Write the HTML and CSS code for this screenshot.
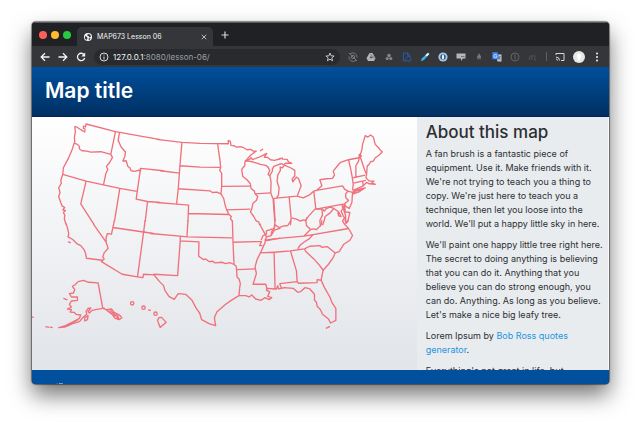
FILE: index.html
```html
<!DOCTYPE html>
<html lang="en">
<head>
<meta charset="utf-8">
<title>MAP673 Lesson 06</title>
<link rel="stylesheet" href="styles.css">
</head>
<body>
<div class="window">
  <div class="tabs">
    <div class="lights"><i class="red"></i><i class="yellow"></i><i class="green"></i></div>
    <div class="tab">
      <svg class="globe" viewBox="0 0 16 16"><circle cx="8" cy="8" r="8" fill="#f1f3f4"/><path d="M2 6l4 2 1 3-2 3-3-3zM8 2l4 1 2 4-3 2-2-3-3-1zM10 10l3 1-2 3-2-1z" fill="#35363a"/></svg>
      <span class="tab-title">MAP673 Lesson 06</span>
      <button class="plain" aria-label="Close tab"><svg class="close" viewBox="0 0 8 8"><path d="M1 1l6 6M7 1L1 7" fill="none" stroke="#c4c7ca" stroke-width="1.2"/></svg></button>
    </div>
    <button class="plain add" aria-label="New tab"><svg class="plus" viewBox="0 0 8 8"><path d="M4 .5v7M.5 4h7" stroke="#d5d7da" stroke-width="1.2"/></svg></button>
  </div>
  <div class="toolbar">
    <button class="plain" aria-label="Back"><svg class="nav" viewBox="0 0 10 10"><path d="M9.500 5H1.500M5 1.200L1.200 5 5 8.800" class="line"/></svg></button>
    <button class="plain" aria-label="Forward"><svg class="nav" viewBox="0 0 10 10"><path d="M.5 5h8M5 1.200L8.800 5 5 8.800" class="line"/></svg></button>
    <button class="plain" aria-label="Reload"><svg class="nav" viewBox="0 0 10 10"><path d="M8.300 3A3.700 3.700 0 1 0 8.700 6" class="line"/><path d="M9.200 .6v3.900H5.300z" fill="#f1f3f4"/></svg></button>
    <div class="address">
      <svg class="info" viewBox="0 0 10 10"><circle cx="5" cy="5" r="4" fill="none" stroke="#d5d7da"/><path d="M5 4.500v3M5 2.500v1" stroke="#d5d7da"/></svg>
      <span class="url"><b>127.0.0.1</b>:8080/lesson-06/</span>
      <svg class="star" viewBox="0 0 10 10"><path d="M5 1l1.100 2.800 3 .2-2.300 1.900.8 2.900L5 7.200 2.400 8.800l.8-2.900L.9 4l3-.2z" fill="none" stroke="#d5d7da" stroke-width=".9"/></svg>
    </div>
    <div class="extensions">
      <svg viewBox="0 0 10 10"><path d="M2 2a4.200 4.200 0 0 1 7 3.500M8 8.300A4.200 4.200 0 0 1 1 4.500M1 1l8 8" fill="none" stroke="#77797c"/><circle cx="5" cy="5" r="1.700" fill="none" stroke="#77797c"/></svg>
      <svg viewBox="0 0 10 10"><path d="M3.500 1h3l3 5.300L8 9H2L.5 6.300z" fill="#b5b5b5"/><path d="M5 3.500L3.500 6.300h3z" fill="#55575a"/><path d="M3.500 1l3 5.300h3" fill="#858585"/></svg>
      <svg viewBox="0 0 10 10"><circle cx="5" cy="3.500" r="1.800" fill="#858585"/><circle cx="3.200" cy="6.500" r="1.600" fill="#858585"/><circle cx="6.800" cy="6.500" r="1.600" fill="#858585"/></svg>
      <svg viewBox="0 0 10 10"><path d="M1.500 1h4l2 2v2M4 9H1.500V1M5.500 1v2h2M4 8a1.500 1.500 0 0 1 1-2.500 1.800 1.800 0 0 1 3.500 1A1.300 1.300 0 0 1 8 9H5z" fill="none" stroke="#245da5"/></svg>
      <svg viewBox="0 0 10 10"><path d="M8 .7L9.300 2 4 8 .8 9.300 2 6.300z" fill="#36b9e8"/><path d="M8 .7L9.300 2 7 4.500 5.300 3.300z" fill="#e5f7ff"/></svg>
      <svg viewBox="0 0 10 10"><circle cx="5" cy="5" r="4.600" fill="#a8c6e6"/><circle cx="5" cy="5" r="2.700" fill="#34577d"/><ellipse cx="5" cy="5" rx="1.100" ry="2.500" fill="#eef5ff"/></svg>
      <svg viewBox="0 0 10 10"><path d="M.5 1.500h9v5H7L5 9V6.500H.5z" fill="#b5b6b8"/><path d="M5 4.500h3.500" stroke="#717376"/></svg>
      <svg viewBox="0 0 10 10"><path d="M5 1c.5 2 2.300 2.500 2 4.500L6 8 5 5.500 4 8 3 5.500C3 4 4.500 3 5 1z" fill="#77797c"/></svg>
      <svg viewBox="0 0 10 10"><path d="M4 2.500h5.500v7H5.500z" fill="#c5c8cc"/><path d="M.3.300h5.200l2 7H.3z" fill="#4285f4"/><path d="M5 3.300a1.700 1.700 0 1 0-.3 2V4.200H3.500" fill="none" stroke="#e2ecff" stroke-width=".8"/><path d="M6.700 5h2.200M8 4v1L7 7.500M7 6l1.700 2" stroke="#58708f" stroke-width=".6"/></svg>
      <svg viewBox="0 0 10 10"><circle cx="5" cy="5" r="4" fill="none" stroke="#626468"/><path d="M5 2.500v5" stroke="#626468"/></svg>
      <svg viewBox="0 0 10 10"><path d="M1 8l1.500-4.500M2 5c1-2 3-2 2 0L3.500 8M4.500 5c1-2 3-2 2.500 0L6.500 8H8" fill="none" stroke="#505256"/></svg>
    </div>
    <span class="divider"></span>
    <svg class="nav" viewBox="0 0 10 10"><path d="M1 3V1.500h8v7H6M1 5a3.500 3.500 0 0 1 3.500 3.500M1 7a1.500 1.500 0 0 1 1.500 1.500" fill="none" stroke="#d5d7da"/></svg>
    <svg class="avatar" viewBox="0 0 12 12"><circle cx="6" cy="6" r="6" fill="#e7e7e7"/><path d="M4 3h4v3.500L7 8v1.500H5V8L4 6.500z" fill="#fff"/></svg>
    <svg class="menu" viewBox="0 0 4 10"><circle cx="2" cy="1.500" r="1" /><circle cx="2" cy="5" r="1"/><circle cx="2" cy="8.500" r="1"/></svg>
  </div>
  <header class="header"><h1>Map title</h1></header>
  <main class="main">
    <div class="map">
      <svg viewBox="6 6 1152 759" preserveAspectRatio="xMinYMin meet" role="img" aria-label="Map of the United States">
        <g class="states">
          <g>
            <path d="M134 34L140 36 152 44 164 51 165 42 160 40 160 33 166 36 168 27 256 50 390 74"/>
            <path d="M134 34L136 50 133 66 134 80 131 88 126 104 115 130 100 158 98 178 92 196 94 204 86 218 90 232 86 244 92 262 96 272 104 277 98 284 106 286 100 292 104 300 103 312 108 328"/>
            <path d="M132 84L142 88 148 94 148 102 156 107 170 108 182 111 212 110 242 118"/>
            <path d="M256 50L242 118 247 127 238 143 229 154 233 163 227 176 220 209"/>
            <path d="M98 178L168 198 220 209 269 220 320 229"/>
            <path d="M268 53L264 76 273 96 286 111 284 124 278 138 288 137 293 154 299 158 303 167 314 169 326 165 331 168 331 160 400 167"/>
            <path d="M331 160L318 252 352 259 390 262M168 198L152 266 192 328M269 220L253 318M352 259L345 320"/>
          </g>
          <g transform="translate(360 0)">
            <path d="M20 73L95 82 150 85 234 86 234 76 240 79 242 91 252 92 257 96 270 95 280 98 290 104 302 103 308 108 318 108 302 119 284 139"/>
            <path d="M284 139L298 132 302 128 306 134 322 128 333 123 349 115 342 127 352 127 360 134 372 136 390 131M329 108L338 102"/>
            <path d="M284 139L290 137 312 142 330 148 346 151 353 156 358 166 353 178 358 182 366 168 366 160"/>
            <path d="M95 82L89 152 84 221 79 267M89 152L150 156 211 157"/>
            <path d="M202 87L205 110 209 135 211 157 208 166 214 174 214 214 212 236 220 250 224 268 229 284 236 298 243 304 240 310 246 318"/>
            <path d="M30 167L88 174M84 221L179 227 186 232 200 231 212 236M214 214L300 213"/>
            <path d="M284 139L283 152 274 163 277 184 290 194 300 206 302 220 312 228 314 236 322 244 318 256 308 264 304 282 300 290 310 304 318 318 325 320 328 330"/>
            <path d="M314 236L361 233M229 284L300 282M115 295L236 298M20 262L79 267 115 270 113 320"/>
            <path d="M358 180L362 200 361 233 367 250M370 252L374 318"/>
          </g>
          <g transform="translate(720 0)">
            <path d="M26 131L36 129 36 132 50 133 54 140 64 145 46 144 40 149 32 146 20 150 10 154 6 162"/>
            <path d="M8 250L18 249 24 240 26 218 20 200 22 180 30 166 29 156 36 158 42 150 60 158 73 166 73 182 65 192 67 200 78 186 84 190 92 212 86 228 80 243 56 245 18 249"/>
            <path d="M8 250L13 318M56 244L62 308 60 330M80 243L98 248 116 240 130 228 138 226M62 308L78 312 90 318 98 314 106 316 110 308 126 290 134 281"/>
            <path d="M130 228L136 282 222 266 234 256 226 248 225 238 232 228 222 222 216 212 138 226 154 212 148 194 168 191 186 190 192 180 188 168 206 146 210 142 234 134 266 128"/>
            <path d="M234 134L240 160 245 186 248 208 246 226M232 228L246 232 244 262 236 280 224 272 222 266M246 232L254 224 284 218 266 230 248 236 256 228 274 224"/>
            <path d="M266 128L266 118 274 124M266 128L264 138 256 152 256 184M268 122L276 146 282 164 288 178M248 188L284 180M248 204L276 198 286 196M276 198L278 212 248 226"/>
            <path d="M288 178L286 188 296 198 310 198 304 203 314 208 296 206 288 202 278 212"/>
            <path d="M268 122L274 104 276 88 284 62 292 66 300 60 308 66 314 88 324 98 328 104 335 110 326 120 314 128 308 138 300 140 294 150 290 152 288 178"/>
            <path d="M136 282L154 281 162 288 166 281 178 276 190 280 204 290 212 304 204 302 202 290M214 268L217 280 212 288 218 302 222 308 216 318 224 330M222 266L224 290 238 292 232 318 226 324 225 300 220 286 220 268"/>
            <path d="M154 281L156 300 148 316 150 334M190 280L178 294 164 304 160 320 156 330"/>
          </g>
          <g transform="translate(0 315)">
            <path d="M108 10L112 22 116 40 114 50 128 58 140 70 152 76 162 88 166 98 169 114 217 120M114 64L122 68"/>
            <path d="M190 12L228 66M253 0L244 42 232 40 228 52 228 66 234 84 222 98 218 110 222 116 214 124 276 162 322 170 338 172 340 162 372 164M345 0L322 170M248 22L370 40"/>
            <path d="M218 264L204 188 176 186 160 180 144 184 134 194 127 198 134 208 130 218 118 220 124 230 142 230 142 240 124 242 118 252 124 260 112 266 124 267 120 275 132 276 138 282 152 284 148 294 130 304 106 316 86 322 104 320 128 310 148 304 160 290 170 282 168 274 174 264 182 263 174 274 178 278 186 270 196 268 218 264"/>
            <path d="M126 308L144 298M164 292L174 286 172 298 164 302ZM218 264L230 268 244 266 252 276 268 284 275 292 267 298 255 294 246 282 232 270M220 262L248 284M240 270L264 294M250 272L252 286 262 282 266 296"/>
            <path d="M46 319L58 321M60 320L68 322M100 234L112 239M6 290L11 291M354 269L362 270"/>
            <circle cx="306" cy="249" r="5"/><circle cx="340" cy="262" r="5"/><circle cx="376" cy="280" r="5"/>
          </g>
          <g transform="translate(360 315)">
            <path d="M0 40L90 48 110 50 246 53M90 48L90 62 82 166 10 162M113 0L110 50M90 62L146 65 145 108 160 118 166 116 176 124 188 123 194 128 214 126 226 130 238 127 250 132 258 138"/>
            <path d="M246 0L248 66 251 132M248 66L326 64 333 64 328 76 336 76M260 148L316 146M258 138L260 170 266 176 270 190 268 202 266 226"/>
            <path d="M345 56L344 68 338 80 330 98 320 118 314 140 318 160 308 192 346 192 350 206M328 10L332 20 342 38 348 50 345 62 390 54M330 98L371 96 374 206"/>
            <path d="M374 0L372 22 364 34 362 46 348 50M362 46L372 30 390 24"/>
            <path d="M10 162L28 184 40 196 44 210 56 228 72 237 84 220 106 222 124 238 138 264 148 278 154 298 176 310 196 316 192 292 200 274 226 252 246 238 266 226 286 226 296 230 304 224 316 236 332 240 344 232 356 238 364 232 352 228 358 214 348 210 350 204 374 206"/>
            <path d="M26 292L34 291 48 306 30 321 26 312 22 300Z"/>
          </g>
          <g transform="translate(690 315)">
            <path d="M15 60L40 56 130 48 158 43 264 25M42 96L90 92 132 86M158 43L146 56 130 66 118 76 112 86"/>
            <path d="M132 86L148 78 178 76 184 81 200 79 224 98M132 86L136 94 160 116 176 134 188 150"/>
            <path d="M254 14L264 25 276 46 268 60 250 72 236 94 224 98 218 112 204 132 188 150 184 168 182 180 192 202 208 230 214 246 226 264 226 300 210 308 204 296 186 282 180 268 170 258 168 246 162 240 162 222 148 206 134 202 120 214 112 216 98 204 72 202 54 206 52 196 48 206 43 206"/>
            <path d="M90 92L108 152 110 184M64 206L58 190 110 184 114 189 170 187 170 178 182 180M196 324L208 319M202 321L208 318"/>
            <path d="M2 60L8 46 18 42 18 32 30 28 40 26 44 14 56 22 68 18 82 16 92 0M130 48L150 28 138 16 136 0 140 -8M150 28L158 26 168 28 182 14 184 0M252 -2L258 8 264 0"/>
          </g>
        </g>
      </svg>
    </div>
    <aside class="about">
      <h2>About this map</h2>
      <p>A fan brush is a fantastic piece of equipment. Use it. Make friends with it. We're not trying to teach you a thing to copy. We're just here to teach you a technique, then let you loose into the world. We'll put a happy little sky in here.</p>
      <p>We'll paint one happy little tree right here. The secret to doing anything is believing that you can do it. Anything that you believe you can do strong enough, you can do. Anything. As long as you believe. Let's make a nice big leafy tree.</p>
      <p>Lorem Ipsum by <a href="#">Bob Ross quotes generator</a>.</p>
      <p>Everything's not great in life, but</p>
    </aside>
  </main>
  <footer class="footer">outline</footer>
</div>
</body>
</html>
```
FILE: styles.css
```css
* { box-sizing: border-box; }

body {
  margin: 0;
  height: 100vh;
  padding: 22px 31px 41px 32px;
  display: flex;
  background: #fff;
  color: #2b2f33;
  font: 9px/14px Inter, "Liberation Sans", sans-serif;
  overflow: hidden;
}

svg { display: block; flex: none; }

.window {
  flex: 1;
  min-width: 0;
  display: flex;
  flex-direction: column;
  overflow: hidden;
  border-radius: 4px;
  background: #202124;
  box-shadow: 0 0 1px 1px rgba(0, 0, 0, .45), 0 11px 22px rgba(0, 0, 0, .55);
}

.plain { padding: 0; border: 0; background: none; }

.tabs {
  flex: none;
  height: 24px;
  display: flex;
  align-items: center;
  border-top: 1px solid #5b5c5f;
  background: #202124;
}

.lights { display: flex; gap: 4px; padding: 0 6px 0 7px; }
.lights i { width: 8px; height: 8px; border-radius: 50%; }
.red { background: #ff5f57; }
.yellow { background: #febc2e; }
.green { background: #28c840; }

.tab {
  width: 136px;
  height: 19px;
  margin-top: 4px;
  padding: 0 6px 0 7px;
  display: flex;
  align-items: center;
  gap: 5px;
  border-radius: 5px 5px 0 0;
  background: #35363a;
  color: #f1f3f4;
  font-size: 7px;
}
.tab-title { flex: 1; white-space: nowrap; }
.globe { width: 8px; height: 8px; }
.close { width: 6px; height: 6px; }
.add { margin-left: 8px; }
.plus { width: 8px; height: 8px; }

.toolbar {
  flex: none;
  height: 21px;
  padding: 0 10px 0 8px;
  display: flex;
  align-items: center;
  gap: 8px;
  background: #35363a;
}
.nav { width: 10px; height: 10px; }
.line { fill: none; stroke: #f1f3f4; stroke-width: 1.3; }

.address {
  flex: 1;
  height: 16px;
  padding: 0 5px;
  display: flex;
  align-items: center;
  gap: 4px;
  border-radius: 8px;
  background: #292a2d;
}
.info, .star { width: 10px; height: 10px; }
.url { flex: 1; color: #9aa0a6; font-size: 8px; white-space: nowrap; }
.url b { color: #f1f3f4; font-weight: 400; }

.extensions { display: flex; gap: 8px; }
.extensions svg { width: 10px; height: 10px; }
.divider { width: 1px; height: 9px; background: #5f6165; }
.avatar { width: 12px; height: 12px; margin-right: 2px; }
.menu { width: 4px; height: 10px; fill: #f1f3f4; }

.header {
  flex: none;
  height: 50px;
  padding: 0 13px;
  display: flex;
  align-items: center;
  background: linear-gradient(#00509d, #002f62);
  border-bottom: 1px solid #00245a;
  color: #fff;
}
h1 { margin: 0 0 2px; font-size: 21px; line-height: 28px; font-weight: 600; }

.main { flex: 1; min-height: 0; display: flex; overflow: hidden; }

.map {
  flex: 1;
  min-width: 0;
  overflow: hidden;
  background: linear-gradient(#fff, #e1e4e9);
}
.map svg { width: 100%; height: auto; }
.states { fill: none; stroke: #f0717c; stroke-width: 4; stroke-linejoin: round; }

.about {
  flex: none;
  width: 33.333%;
  padding: 4px 4px 0 9px;
  overflow: hidden;
  background: #e9ecef;
  border-right: 1px solid #f8f9fa;
}
h2 { margin: 0 0 4px; font-size: 17px; line-height: 22px; font-weight: 500; }
p { margin: 0 0 7px; }
a { color: #1b95e0; text-decoration: none; }

.footer {
  flex: none;
  height: 14px;
  padding: 10px 13px 0;
  background: #00509d;
  color: #fff;
  overflow: hidden;
}
```
